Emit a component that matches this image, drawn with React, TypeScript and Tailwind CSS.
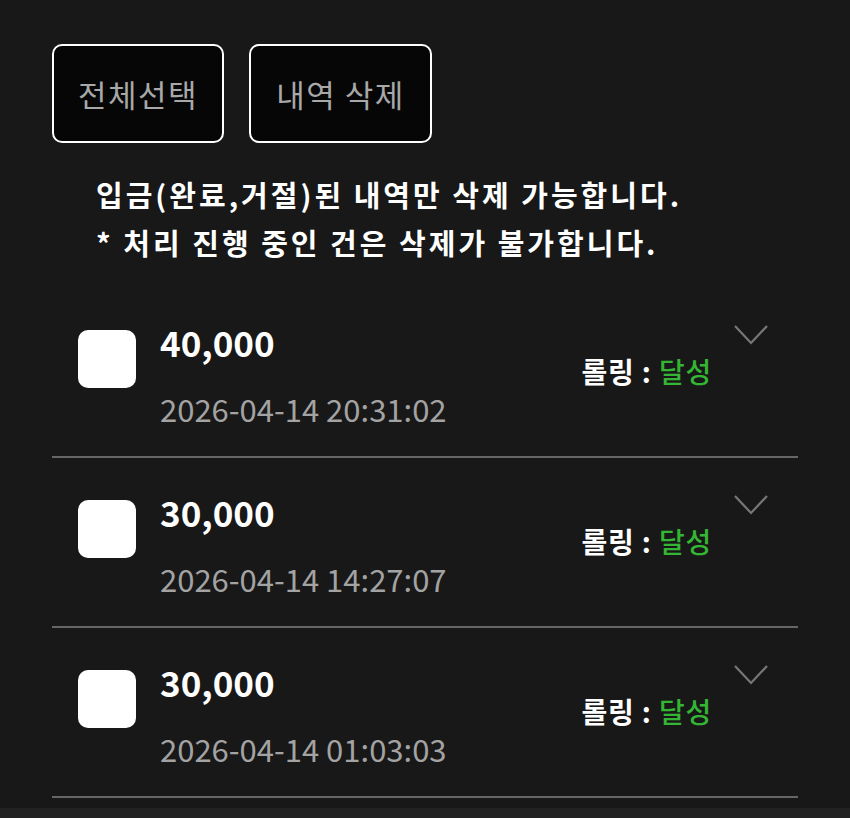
const items = [
  { amount: "40,000", date: "2026-04-14 20:31:02" },
  { amount: "30,000", date: "2026-04-14 14:27:07" },
  { amount: "30,000", date: "2026-04-14 01:03:03" },
];

export default function App() {
  return (
    <div
      className="min-h-screen w-full bg-[#181818] flex flex-col"
      style={{ fontFamily: '"Noto Sans CJK KR", "Noto Sans", sans-serif' }}
    >
      <div className="pl-[52px] pr-[52px] pt-[44px]">
        {/* action buttons */}
        <div className="flex gap-[25px]">
          <button className="w-[172px] h-[99px] rounded-[10px] border-2 border-white bg-[#060606] text-[#a8a8a8] text-[31px] tracking-[1.5px] leading-none">
            전체선택
          </button>
          <button className="w-[183px] h-[99px] rounded-[10px] border-2 border-white bg-[#060606] text-[#a8a8a8] text-[31px] tracking-[1.5px] leading-none">
            내역 삭제
          </button>
        </div>

        {/* notice */}
        <div className="mt-[27px] pl-[44px] text-white font-bold text-[29px] tracking-[3px] leading-[48px]">
          <p>입금(완료,거절)된 내역만 삭제 가능합니다.</p>
          <p>* 처리 진행 중인 건은 삭제가 불가합니다.</p>
        </div>

        {/* history list */}
        <div className="mt-[22px]">
          {items.map((item, i) => (
            <div key={i} className="border-b-2 border-[#666666] h-[170px] flex items-start pl-[26px] pr-[30px]">
              <div className="mt-[42px] w-[58px] h-[58px] rounded-[10px] bg-white shrink-0" />
              <div className="ml-[24px] mt-[32px] flex flex-col">
                <span className="text-white font-bold text-[35px] leading-[44px]">{item.amount}</span>
                <span className="mt-[25px] text-[#a3a3a3] text-[31px] leading-[40px]">{item.date}</span>
              </div>
              <div className="ml-auto mt-[65px] text-[28px] font-bold leading-[36px] text-white tracking-[0.8px]">
                롤링 : <span className="text-[#34b534] font-medium">달성</span>
              </div>
              <svg
                className="ml-[22px] mt-[37px] shrink-0"
                width="34"
                height="20"
                viewBox="0 0 34 20"
                fill="none"
                stroke="#777777"
                strokeWidth="2.2"
              >
                <path d="M1 1l16 17L33 1" />
              </svg>
            </div>
          ))}
        </div>
      </div>
      <div className="mt-[10px] flex-1 bg-[#222222]" />
    </div>
  );
}
